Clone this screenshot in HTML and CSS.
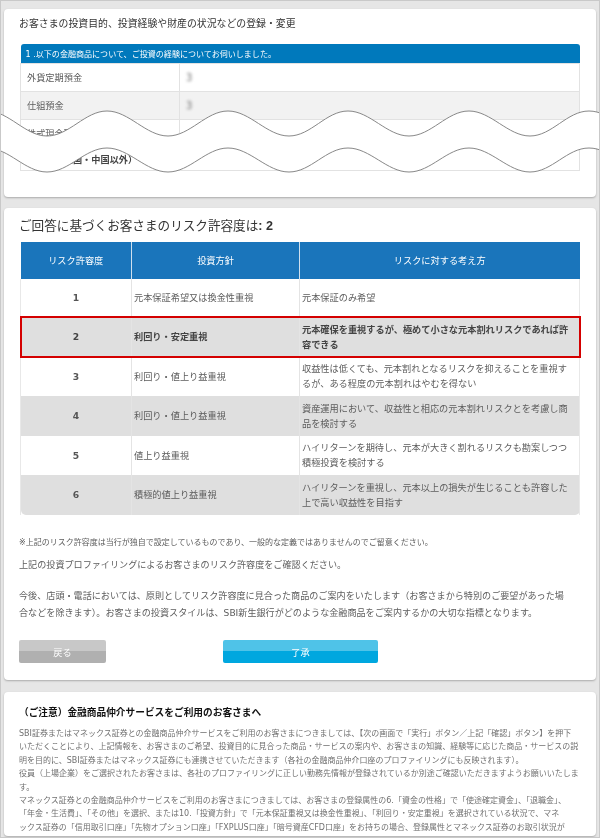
FILE: index.html
```html
<!DOCTYPE html>
<html lang="ja">
<head>
    <meta charset="UTF-8">
    <meta name="viewport" content="width=device-width, initial-scale=1.0">
    <title>投資プロファイリング</title>
    <link rel="stylesheet" href="styles.css">
</head>
<body>
    <div class="page">
        <section class="card card-profile">
            <h2 class="profile-title">お客さまの投資目的、投資経験や財産の状況などの登録・変更</h2>
            <table class="exp-table">
                <colgroup><col class="exp-col-label"><col></colgroup>
                <tr><th colspan="2">1 .以下の金融商品について、ご投資の経験についてお伺いしました。</th></tr>
                <tr><td>外貨定期預金</td><td><span class="masked">3</span></td></tr>
                <tr class="alt"><td>仕組預金</td><td><span class="masked">3</span></td></tr>
                <tr><td>株式現金取引</td><td></td></tr>
                <tr class="last"><td class="strong">外国株（米国・中国以外）</td><td></td></tr>
            </table>
        </section>

        <section class="card card-risk">
            <h2 class="risk-title">ご回答に基づくお客さまのリスク許容度は<b>: 2</b></h2>
            <div class="risk-wrap">
                <table class="risk-table">
                    <colgroup><col class="col-level"><col class="col-policy"><col></colgroup>
                    <tr class="risk-head">
                        <th>リスク許容度</th>
                        <th>投資方針</th>
                        <th>リスクに対する考え方</th>
                    </tr>
                    <tr>
                        <td class="level">1</td>
                        <td>元本保証希望又は換金性重視</td>
                        <td>元本保証のみ希望</td>
                    </tr>
                    <tr class="grey selected">
                        <td class="level">2</td>
                        <td>利回り・安定重視</td>
                        <td>元本確保を重視するが、極めて小さな元本割れリスクであれば許容できる</td>
                    </tr>
                    <tr>
                        <td class="level">3</td>
                        <td>利回り・値上り益重視</td>
                        <td>収益性は低くても、元本割れとなるリスクを抑えることを重視するが、ある程度の元本割れはやむを得ない</td>
                    </tr>
                    <tr class="grey">
                        <td class="level">4</td>
                        <td>利回り・値上り益重視</td>
                        <td>資産運用において、収益性と相応の元本割れリスクとを考慮し商品を検討する</td>
                    </tr>
                    <tr>
                        <td class="level">5</td>
                        <td>値上り益重視</td>
                        <td>ハイリターンを期待し、元本が大きく割れるリスクも勘案しつつ積極投資を検討する</td>
                    </tr>
                    <tr class="grey">
                        <td class="level">6</td>
                        <td>積極的値上り益重視</td>
                        <td>ハイリターンを重視し、元本以上の損失が生じることも許容した上で高い収益性を目指す</td>
                    </tr>
                </table>
                <div class="risk-mark"></div>
            </div>

            <p class="small-note">※上記のリスク許容度は当行が独自で設定しているものであり、一般的な定義ではありませんのでご留意ください。</p>
            <p class="lead">上記の投資プロファイリングによるお客さまのリスク許容度をご確認ください。</p>
            <p class="guide">今後、店頭・電話においては、原則としてリスク許容度に見合った商品のご案内をいたします（お客さまから特別のご要望があった場<br>合などを除きます）。お客さまの投資スタイルは、SBI新生銀行がどのような金融商品をご案内するかの大切な指標となります。</p>

            <div class="buttons">
                <button type="button" class="btn btn-back">戻る</button>
                <button type="button" class="btn btn-ok">了承</button>
            </div>
        </section>

        <section class="card card-notice">
            <h3 class="notice-title">（ご注意）金融商品仲介サービスをご利用のお客さまへ</h3>
            <p class="notice-text">
                SBI証券またはマネックス証券との金融商品仲介サービスをご利用のお客さまにつきましては、【次の画面で「実行」ボタン／上記「確認」ボタン】を押下<br>
                いただくことにより、上記情報を、お客さまのご希望、投資目的に見合った商品・サービスの案内や、お客さまの知識、経験等に応じた商品・サービスの説<br>
                明を目的に、SBI証券またはマネックス証券にも連携させていただきます（各社の金融商品仲介口座のプロファイリングにも反映されます）。<br>
                役員（上場企業）をご選択されたお客さまは、各社のプロファイリングに正しい勤務先情報が登録されているか別途ご確認いただきますようお願いいたしま<br>
                す。<br>
                マネックス証券との金融商品仲介サービスをご利用のお客さまにつきましては、お客さまの登録属性の6.「資金の性格」で「使途確定資金」、「退職金」、<br>
                「年金・生活費」、「その他」を選択、または10.「投資方針」で「元本保証重視又は換金性重視」、「利回り・安定重視」を選択されている状況で、マネ<br>
                ックス証券の「信用取引口座」「先物オプション口座」「FXPLUS口座」「暗号資産CFD口座」をお持ちの場合、登録属性とマネックス証券のお取引状況が
            </p>
        </section>

        <!-- torn paper band across the first table -->
        <svg class="tear" width="600" height="180" viewBox="0 0 600 180">
            <path class="tear-fill" d="M-13 111 C9 111 25 136 47 136 S85 111 107 111 S146 136 168 136 S206 111 228 111 S267 136 289 136 S326 111 348 111 S387 136 409 136 S447 111 469 111 S508 136 530 136 S567 111 589 111 S628 136 650 136 L650 172 S611 148 589 148 S552 172 530 172 S491 148 469 148 S431 172 409 172 S370 148 348 148 S311 172 289 172 S250 148 228 148 S190 172 168 172 S129 148 107 148 S69 172 47 172 S9 148 -13 148 Z"/>
            <path class="tear-line" d="M-13 111 C9 111 25 136 47 136 S85 111 107 111 S146 136 168 136 S206 111 228 111 S267 136 289 136 S326 111 348 111 S387 136 409 136 S447 111 469 111 S508 136 530 136 S567 111 589 111 S628 136 650 136"/>
            <path class="tear-line" d="M-13 148 C9 148 25 172 47 172 S85 148 107 148 S146 172 168 172 S206 148 228 148 S267 172 289 172 S326 148 348 148 S387 172 409 172 S447 148 469 148 S508 172 530 172 S567 148 589 148 S628 172 650 172"/>
        </svg>
    </div>
</body>
</html>
```

FILE: styles.css
```css
html, body {
    margin: 0;
    height: 100%;
    overflow: hidden;
}

body {
    font-family: "DejaVu Sans", "Noto Sans CJK JP", sans-serif;
    color: #5c5c5c;
    background: #fff;
}

.page {
    position: relative;
    box-sizing: border-box;
    height: 838px;
    overflow: hidden;
    padding: 8px 3px 0 3px;
    background-color: #e6e6e6;
    border: 1px solid #c9c9c9;
}

.card {
    box-sizing: border-box;
    background-color: #fff;
    border-radius: 4px;
    box-shadow: 0 1px 2px #aaa;
    padding: 0 15px 0 15px;
}

/* text in the reference is a soft, rescaled capture */
.card > * {
    filter: blur(0.3px);
}

/* first card */
.card-profile {
    height: 188px;
    padding-top: 8px;
}

.profile-title {
    margin: 0 0 13px 0;
    font-size: 9.9px;
    line-height: 14px;
    font-weight: normal;
    color: #333;
}

.exp-table {
    width: 560px;
    margin-left: 1px;
    border-collapse: collapse;
    table-layout: fixed;
}

.exp-col-label {
    width: 159px;
}

.exp-table th {
    height: 19px;
    padding: 0 0 0 5px;
    text-align: left;
    font-size: 8.05px;
    font-weight: normal;
    color: #fff;
    background-color: #0079bc;
    border-radius: 3px 3px 0 0;
}

.exp-table td {
    box-sizing: border-box;
    height: 28px;
    padding: 0 0 1px 6px;
    font-size: 9.2px;
    border: 1px solid #e2e2e2;
}

.exp-table .alt td {
    background-color: #f2f2f2;
}

.exp-table .last td {
    height: 23px;
}

.exp-table .strong {
    font-weight: bold;
    color: #444;
}

.masked {
    display: inline-block;
    font-size: 10px;
    color: #777;
    filter: blur(1.5px);
}

/* second card */
.card-risk {
    height: 472px;
    margin-top: 11px;
    padding-top: 9px;
}

.risk-title {
    margin: 0 0 7px 0;
    font-size: 12.6px;
    line-height: 17px;
    font-weight: normal;
    color: #333;
}

.risk-title b {
    font-family: "Liberation Sans", sans-serif;
}

.risk-wrap {
    position: relative;
    width: 560px;
    margin-left: 1px;
}

.risk-wrap.risk-wrap {
    filter: none;
}

.risk-table {
    width: 100%;
    border-collapse: collapse;
    table-layout: fixed;
    font-size: 9.2px;
    line-height: 15px;
    filter: blur(0.3px);
}

.risk-table th {
    height: 37px;
    padding: 0;
    font-size: 9.2px;
    font-weight: normal;
    color: #fff;
    background-color: #1a75bb;
    border-left: 1px solid #cfe0ee;
}

.risk-table th:first-child {
    border-left: 0;
}

.col-level {
    width: 111px;
}

.col-policy {
    width: 168px;
}

.risk-table td {
    padding: 0 8px 1px 2px;
    border-left: 1px solid #e4e4e4;
}

.risk-table td:first-child {
    border-left: 1px solid #e8e8e8;
}

.risk-table td:last-child {
    border-right: 1px solid #e8e8e8;
}

.risk-table tr:nth-child(even) td {
    height: 38px;
}

.risk-table tr:nth-child(odd) td {
    height: 39px;
}

.risk-table tr:nth-child(2) td {
    height: 37px;
}

.risk-table .selected td {
    height: 40px;
    font-weight: bold;
    color: #444;
}

.risk-table .level {
    padding: 0 0 1px 0;
    text-align: center;
    font-weight: bold;
    color: #555;
}

.risk-table .grey td {
    background-color: #dfdfdf;
}

.risk-table .grey:last-child td:first-child {
    border-bottom-left-radius: 5px;
}

.risk-table .grey:last-child td:last-child {
    border-bottom-right-radius: 5px;
}

.risk-mark {
    position: absolute;
    top: 74px;
    left: 0;
    right: -1px;
    height: 42px;
    box-sizing: border-box;
    border: 2px solid #d40000;
}

.small-note {
    margin: 22px 0 0 0;
    font-size: 8px;
    line-height: 12px;
}

.lead {
    margin: 9px 0 0 0;
    font-size: 9.1px;
    line-height: 14px;
}

.guide {
    margin: 16px 0 0 0;
    font-size: 9.1px;
    line-height: 17px;
    white-space: nowrap;
}

.buttons {
    display: flex;
    margin-top: 18px;
}

.btn {
    height: 23px;
    padding: 0;
    border: 0;
    border-radius: 2px;
    font-family: inherit;
    font-size: 9.2px;
    color: #fff;
}

.btn-back {
    width: 87px;
    background: linear-gradient(#c8c8c8 50%, #b0b0b0 50%);
}

.btn-ok {
    width: 155px;
    margin-left: 117px;
    background: linear-gradient(#4fc3e8 50%, #00a7df 50%);
}

/* third card */
.card-notice {
    height: 144px;
    margin-top: 12px;
    padding-top: 14px;
    overflow: hidden;
}

.notice-title {
    margin: 0 0 7px 0;
    font-size: 9.7px;
    line-height: 14px;
    color: #111;
}

.notice-text {
    margin: 0;
    font-size: 8px;
    line-height: 13.4px;
    color: #707070;
    white-space: nowrap;
}

/* tear overlay */
.tear {
    position: absolute;
    top: -1px;
    left: -1px;
}

.tear-fill {
    fill: #fff;
}

.tear-line {
    fill: none;
    stroke: #888;
    stroke-width: 1;
}
```
